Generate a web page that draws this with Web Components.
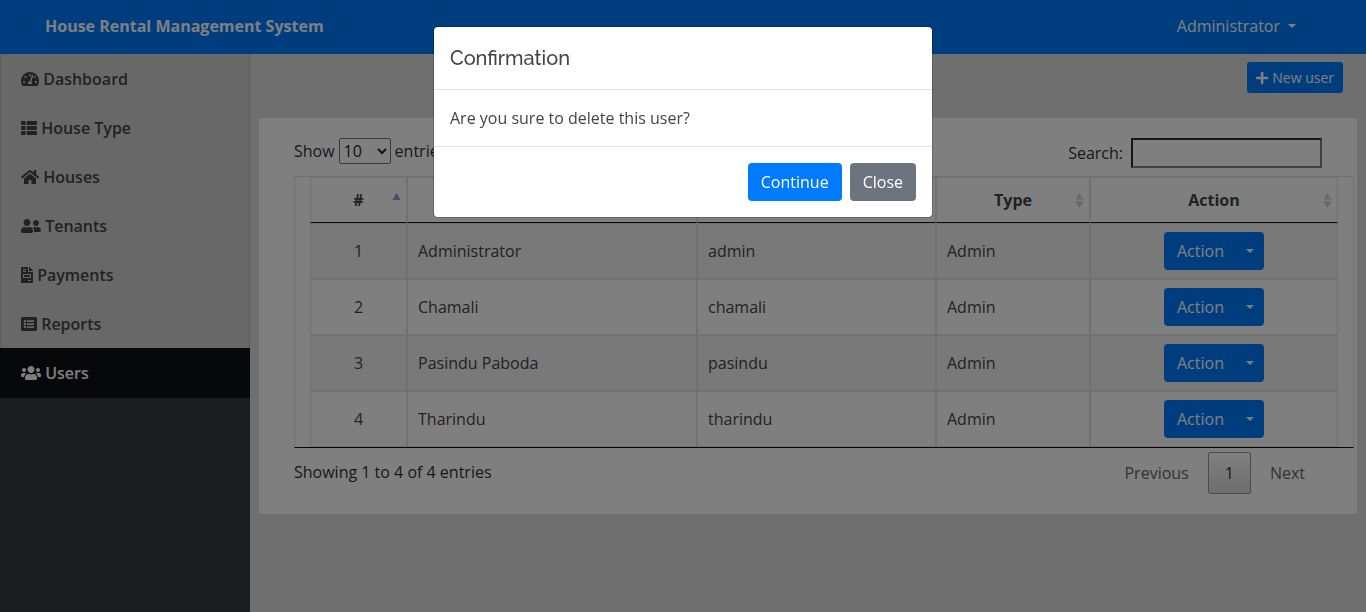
<!DOCTYPE html>
<html lang="en">
<head>
<meta charset="utf-8">
<title>House Rental Management System</title>
<style>
html,body{margin:0;height:100%;overflow:hidden}
body{font:16px/24px "Open Sans",sans-serif;color:#444;background:#dedede}
</style>
</head>
<body>
<rental-app></rental-app>
<script>
const ICONS={
tach:[576,'M288 32C128.94 32 0 160.94 0 320c0 52.8 14.25 102.26 39.06 144.8 5.61 9.62 16.3 15.2 27.44 15.2h443c11.14 0 21.83-5.58 27.44-15.2C561.75 422.26 576 372.8 576 320c0-159.06-128.94-288-288-288zm0 64c14.71 0 26.58 10.13 30.32 23.65-1.11 2.26-2.64 4.23-3.45 6.67l-9.22 27.67c-5.13 3.49-10.97 6.01-17.64 6.01-17.67 0-32-14.33-32-32S270.33 96 288 96zM96 384c-17.67 0-32-14.33-32-32s14.33-32 32-32 32 14.33 32 32-14.33 32-32 32zm48-160c-17.67 0-32-14.33-32-32s14.33-32 32-32 32 14.33 32 32-14.33 32-32 32zm246.77-72.41l-61.33 184C343.13 347.33 352 364.54 352 384c0 11.72-3.38 22.55-8.88 32H232.88c-5.5-9.45-8.88-20.28-8.88-32 0-33.94 26.5-61.43 59.9-63.59l61.34-184.01c4.17-12.56 17.73-19.45 30.36-15.17 12.57 4.19 19.35 17.79 15.17 30.36zm14.66 57.2l15.52-46.55c3.47-1.29 7.13-2.23 11.05-2.23 17.67 0 32 14.33 32 32s-14.33 32-32 32c-11.38-.01-20.89-6.28-26.57-15.22zM480 384c-17.67 0-32-14.33-32-32s14.33-32 32-32 32 14.33 32 32-14.33 32-32 32z'],
thlist:[512,'M149.333 216v80c0 13.255-10.745 24-24 24H24c-13.255 0-24-10.745-24-24v-80c0-13.255 10.745-24 24-24h101.333c13.255 0 24 10.745 24 24zM0 376v80c0 13.255 10.745 24 24 24h101.333c13.255 0 24-10.745 24-24v-80c0-13.255-10.745-24-24-24H24c-13.255 0-24 10.745-24 24zM125.333 32H24C10.745 32 0 42.745 0 56v80c0 13.255 10.745 24 24 24h101.333c13.255 0 24-10.745 24-24V56c0-13.255-10.745-24-24-24zm80 448H488c13.255 0 24-10.745 24-24v-80c0-13.255-10.745-24-24-24H205.333c-13.255 0-24 10.745-24 24v80c0 13.255 10.745 24 24 24zm-24-424v80c0 13.255 10.745 24 24 24H488c13.255 0 24-10.745 24-24V56c0-13.255-10.745-24-24-24H205.333c-13.255 0-24 10.745-24 24zm24 264H488c13.255 0 24-10.745 24-24v-80c0-13.255-10.745-24-24-24H205.333c-13.255 0-24 10.745-24 24v80c0 13.255 10.745 24 24 24z'],
home:[576,'M280.37 148.26L96 300.11V464a16 16 0 0 0 16 16l112.06-.29a16 16 0 0 0 15.92-16V368a16 16 0 0 1 16-16h64a16 16 0 0 1 16 16v95.64a16 16 0 0 0 16 16.05L464 480a16 16 0 0 0 16-16V300L295.67 148.26a12.19 12.19 0 0 0-15.3 0zM571.6 251.47L488 182.56V44.05a12 12 0 0 0-12-12h-56a12 12 0 0 0-12 12v72.61L318.47 43a48 48 0 0 0-61 0L4.34 251.47a12 12 0 0 0-1.6 16.9l25.5 31A12 12 0 0 0 45.15 301l235.22-193.74a12.19 12.19 0 0 1 15.3 0L530.9 301a12 12 0 0 0 16.9-1.6l25.5-31a12 12 0 0 0-1.7-16.93z'],
friends:[640,'M192 256c61.9 0 112-50.1 112-112S253.9 32 192 32 80 82.1 80 144s50.1 112 112 112zm76.8 32h-8.3c-20.8 10-43.9 16-68.5 16s-47.6-6-68.5-16h-8.3C51.6 288 0 339.6 0 403.2V432c0 26.5 21.5 48 48 48h288c26.5 0 48-21.5 48-48v-28.8c0-63.6-51.6-115.2-115.2-115.2zM480 256c53 0 96-43 96-96s-43-96-96-96-96 43-96 96 43 96 96 96zm48 32h-3.8c-13.9 4.8-28.6 8-44.2 8s-30.3-3.2-44.2-8H432c-20.4 0-39.2 5.9-55.7 15.4 24.4 26.3 39.7 61.2 39.7 99.8v38.4c0 2.2-.5 4.3-.6 6.4H592c26.5 0 48-21.5 48-48 0-61.9-50.1-112-112-112z'],
invoice:[384,'M288 256H96v64h192v-64zm89-151L279.1 7c-4.5-4.500-10.6-7-17-7H256v128h128v-6.100c0-6.300-2.500-12.400-7-16.900zm-153 31V0H24C10.700 0 0 10.700 0 24v464c0 13.300 10.700 24 24 24h336c13.300 0 24-10.700 24-24V160H248c-13.200 0-24-10.800-24-24zM64 72c0-4.420 3.580-8 8-8h80c4.420 0 8 3.580 8 8v16c0 4.420-3.580 8-8 8H72c-4.420 0-8-3.580-8-8V72zm0 64c0-4.420 3.580-8 8-8h80c4.420 0 8 3.580 8 8v16c0 4.420-3.580 8-8 8H72c-4.420 0-8-3.580-8-8v-16zm256 304c0 4.420-3.580 8-8 8h-80c-4.420 0-8-3.580-8-8v-16c0-4.420 3.580-8 8-8h80c4.420 0 8 3.580 8 8v16zm0-200v96c0 8.840-7.160 16-16 16H80c-8.840 0-16-7.160-16-16v-96c0-8.840 7.160-16 16-16h224c8.840 0 16 7.160 16 16z'],
listalt:[512,'M464 480H48c-26.510 0-48-21.490-48-48V80c0-26.510 21.490-48 48-48h416c26.510 0 48 21.490 48 48v352c0 26.510-21.490 48-48 48zM128 120c-22.091 0-40 17.909-40 40s17.909 40 40 40 40-17.909 40-40-17.909-40-40-40zm0 96c-22.091 0-40 17.909-40 40s17.909 40 40 40 40-17.909 40-40-17.909-40-40-40zm0 96c-22.091 0-40 17.909-40 40s17.909 40 40 40 40-17.909 40-40-17.909-40-40-40zm288-136v-32c0-6.627-5.373-12-12-12H204c-6.627 0-12 5.373-12 12v32c0 6.627 5.373 12 12 12h200c6.627 0 12-5.373 12-12zm0 96v-32c0-6.627-5.373-12-12-12H204c-6.627 0-12 5.373-12 12v32c0 6.627 5.373 12 12 12h200c6.627 0 12-5.373 12-12zm0 96v-32c0-6.627-5.373-12-12-12H204c-6.627 0-12 5.373-12 12v32c0 6.627 5.373 12 12 12h200c6.627 0 12-5.373 12-12z'],
users:[640,'M96 224c35.300 0 64-28.700 64-64s-28.700-64-64-64-64 28.700-64 64 28.700 64 64 64zm448 0c35.300 0 64-28.700 64-64s-28.700-64-64-64-64 28.700-64 64 28.700 64 64 64zm32 32h-64c-17.600 0-33.500 7.100-45.100 18.600 40.300 22.100 68.900 62 75.100 109.400h66c17.700 0 32-14.300 32-32v-32c0-35.300-28.700-64-64-64zm-256 0c61.900 0 112-50.100 112-112S381.900 32 320 32 208 82.100 208 144s50.100 112 112 112zm76.800 32h-8.300c-20.800 10-43.900 16-68.500 16s-47.600-6-68.500-16h-8.300C179.600 288 128 339.600 128 403.200V432c0 26.500 21.500 48 48 48h288c26.500 0 48-21.500 48-48v-28.800c0-63.600-51.600-115.200-115.200-115.200zm-223.700-13.400C161.500 263.100 145.600 256 128 256H64c-35.300 0-64 28.700-64 64v32c0 17.700 14.300 32 32 32h65.900c6.300-47.400 34.900-87.300 75.200-109.400z'],
plus:[448,'M416 208H272V64c0-17.670-14.330-32-32-32h-32c-17.670 0-32 14.330-32 32v144H32c-17.670 0-32 14.330-32 32v32c0 17.670 14.330 32 32 32h144v144c0 17.670 14.330 32 32 32h32c17.670 0 32-14.330 32-32V304h144c17.670 0 32-14.330 32-32v-32c0-17.670-14.330-32-32-32z']
};
function define(name,render){
  customElements.define(name,class extends HTMLElement{
    constructor(){super();this.attachShadow({mode:'open'})}
    connectedCallback(){this.shadowRoot.innerHTML=render(this)}
  });
}

define('fa-icon',el=>{
  const [w,d]=ICONS[el.getAttribute('name')];
  return `<style>:host{display:inline-block;height:1em;width:${w/512}em;line-height:1;vertical-align:-.125em}svg{display:block;width:100%;height:100%}</style>
  <svg viewBox="0 0 ${w} 512" fill="currentColor"><path d="${d}"/></svg>`;
});

define('drop-caret',()=>`<style>:host{display:inline-block;border-top:.3em solid;border-right:.3em solid transparent;border-left:.3em solid transparent;vertical-align:.255em}</style>`);

define('top-bar',()=>`<style>
:host{display:flex;justify-content:space-between;align-items:center;height:54px;box-sizing:border-box;padding:0 70px 2px 45px;background:#007bff;color:#fff}
b{font-weight:700}drop-caret{margin-left:8px}
</style><b>House Rental Management System</b><span>Administrator<drop-caret></drop-caret></span>`);

define('nav-item',el=>`<style>
:host{display:block;box-sizing:border-box;height:49px;padding:13px 20px 12px;border:solid #bababa;border-width:0 1px;background:#d1d1d1;color:#454545;font-weight:600}
:host(:first-child){border-top-width:1px;padding-top:12px}
:host([active]){background:#0f1113;border-color:#0f1113;color:#fff;height:50px}
</style><fa-icon name="${el.getAttribute('icon')}"></fa-icon> <slot></slot>`);

define('side-bar',()=>`<style>
:host{display:block;width:250px;flex:none;background:#343a40}
</style>
<nav-item icon="tach">Dashboard</nav-item><nav-item icon="thlist">House Type</nav-item><nav-item icon="home">Houses</nav-item><nav-item icon="friends">Tenants</nav-item><nav-item icon="invoice">Payments</nav-item><nav-item icon="listalt">Reports</nav-item><nav-item icon="users" active>Users</nav-item>`);

define('ui-button',()=>`<style>
:host{display:inline-block;box-sizing:border-box;padding:7px 13px;border-radius:4px;background:#007bff;color:#fff}
:host([kind=secondary]){background:#6c757d}
:host([small]){font-size:14px;line-height:21px;padding:5px 9px;border-radius:3.2px}
</style><slot></slot>`);

define('action-button',()=>`<style>
:host{display:inline-flex;width:100px;height:38px;box-sizing:border-box;justify-content:space-between;align-items:center;padding:0 10px 0 13px;border-radius:4px;background:#007bff;color:#fff;vertical-align:top}
</style><span>Action</span><drop-caret></drop-caret>`);

define('sort-mark',el=>`<style>
:host{position:absolute;right:5px;top:15px;width:9px;height:15px}svg{display:block}
</style><svg width="9" height="15">${el.hasAttribute('asc')?'<path d="M4.500 0L8.700 7H.3z" fill="#9292e4"/>':'<path d="M4.500 0L8.700 6.500H.3zM.3 8.300H8.700L4.500 15z" fill="#d3d3d3"/>'}</svg>`);

define('users-table',()=>{
  const rows=[['Administrator','admin'],['Chamali','chamali'],['Pasindu Paboda','pasindu'],['Tharindu','tharindu']];
  return `<style>
:host{display:block;box-sizing:border-box;width:1060px;height:272px;padding:0 15px;border:1px solid #dee2e6;border-bottom-color:#111}
table{width:1028px;table-layout:fixed;border-collapse:separate;border-spacing:0}
th,td{box-sizing:border-box;border:1px solid #dee2e6}
th{position:relative;height:46px;padding:10px 18px;font-weight:700;border-bottom-color:#111;text-align:center}
td{height:56px;padding:8px 10px;vertical-align:middle}
tbody tr:nth-child(odd){background:#f2f2f2}
.c{text-align:center}
</style><table><colgroup><col style="width:97px"><col style="width:290px"><col style="width:239px"><col style="width:154px"><col style="width:248px"></colgroup>
<thead><tr><th>#<sort-mark asc></sort-mark></th><th></th><th></th><th>Type<sort-mark></sort-mark></th><th>Action<sort-mark></sort-mark></th></tr></thead>
<tbody>${rows.map((r,i)=>`<tr><td class="c">${i+1}</td><td>${r[0]}</td><td>${r[1]}</td><td>Admin</td><td class="c"><action-button></action-button></td></tr>`).join('')}</tbody></table>`;
});

define('table-controls',()=>`<style>
:host{display:flex;justify-content:space-between;align-items:flex-start;height:38px;color:#333}
label{display:flex;align-items:center}
select{font:inherit;width:52px;height:26px;box-sizing:border-box;margin:0 4px;padding:0;border:1px solid #767676;border-radius:2px;background:#fff;color:#212529}
input{box-sizing:border-box;width:191px;height:30px;margin:0 0 0 8px;border:2px solid;border-color:#2c2c2c #808080 #808080 #2c2c2c;background:transparent}
</style><label>Show <select><option>10</option></select> entries</label><label>Search:<input></label>`);

define('table-footer',()=>`<style>
:host{display:flex;justify-content:space-between;align-items:flex-start;padding-top:4px;color:#333}
.info{padding-top:8px}.pages{display:flex;gap:2px}
.pages span{padding:8px 16px;border:1px solid transparent;border-radius:2px;color:#666}
.pages .on{color:#333;border-color:#979797;background:linear-gradient(#fff,#dcdcdc)}
</style><div class="info">Showing 1 to 4 of 4 entries</div><div class="pages"><span>Previous</span><span class="on">1</span><span>Next</span></div>`);

define('users-view',()=>`<style>
:host{display:flex;flex-direction:column;flex:1;min-width:0;padding:8px 9px 0}
.bar{display:flex;justify-content:flex-end;padding-right:14px;margin-bottom:25px}
.card{box-sizing:border-box;height:396px;padding:20px 35px 0;border-radius:4px;background:#fff}
</style><div class="bar"><ui-button small><fa-icon name="plus"></fa-icon> New user</ui-button></div>
<div class="card"><table-controls></table-controls><users-table></users-table><table-footer></table-footer></div>`);

define('confirm-dialog',()=>`<style>
:host{position:fixed;inset:0;display:flex;justify-content:center;align-items:flex-start;padding-top:26px;background:rgba(0,0,0,.5)}
.box{box-sizing:border-box;width:500px;height:192px;border:1px solid rgba(0,0,0,.2);border-radius:4.8px;background:#fff;background-clip:padding-box}
h5{margin:0;padding:16px;border-bottom:1px solid #dee2e6;font:500 20px/30px Raleway,Lato,sans-serif}
p{margin:0;padding:16px}
footer{display:flex;justify-content:flex-end;gap:8px;padding:16px;border-top:1px solid #dee2e6}
</style><div class="box"><h5>Confirmation</h5><p>Are you sure to delete this user?</p><footer><ui-button>Continue</ui-button><ui-button kind="secondary">Close</ui-button></footer></div>`);

define('rental-app',()=>`<style>
:host{display:flex;flex-direction:column;height:100vh}
main{display:flex;flex:1;min-height:0}
</style><top-bar></top-bar><main><side-bar></side-bar><users-view></users-view></main><confirm-dialog></confirm-dialog>`);
</script>
</body>
</html>
